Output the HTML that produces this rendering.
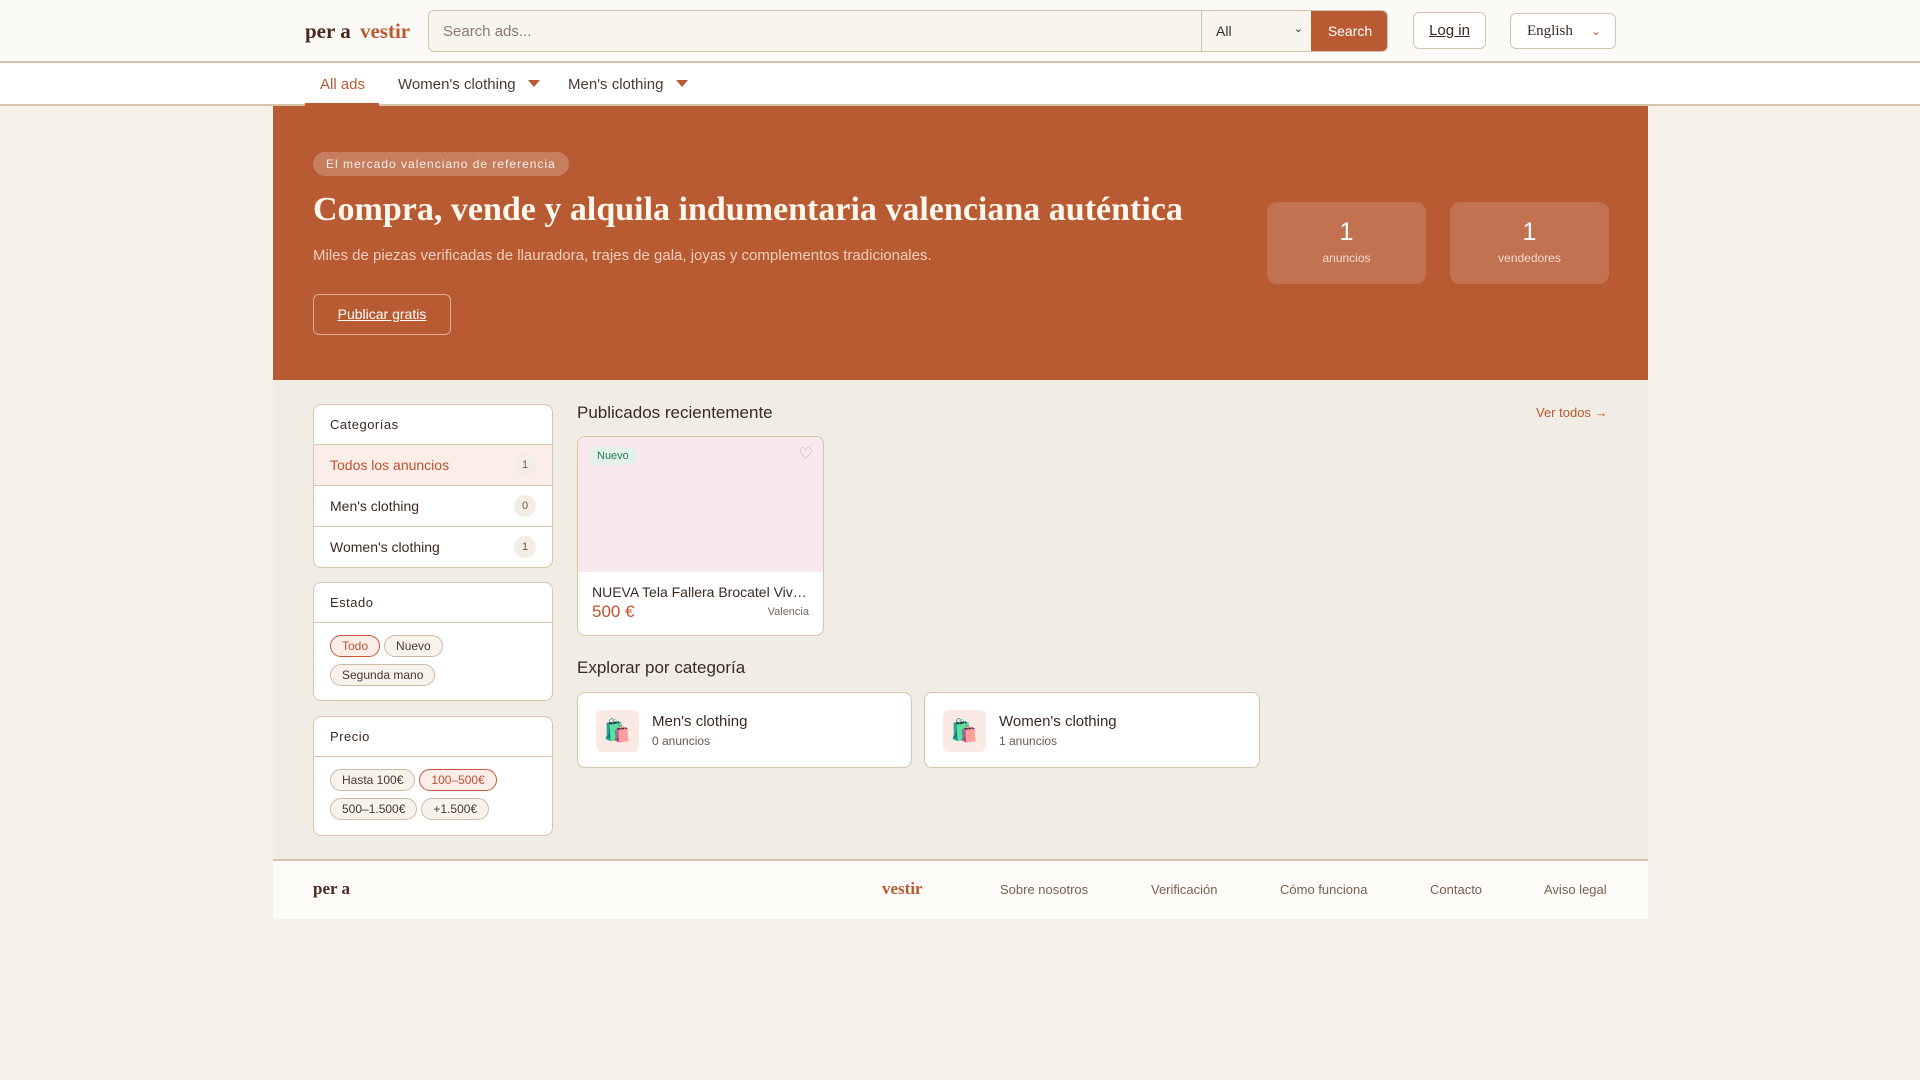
<!DOCTYPE html>
<html><head><meta charset="utf-8"><style>
*{box-sizing:border-box;margin:0;padding:0}
body{width:1920px;height:1080px;background:#f6f2eb;font-family:"Liberation Sans",sans-serif;position:relative;overflow:hidden;color:#3a2a22}
.a{position:absolute}
.serif{font-family:"Liberation Serif",serif}
#hdr{left:0;top:0;width:1920px;height:63px;background:#fcfaf7;border-bottom:2px solid #d6c3ab}
#nav{left:0;top:63px;width:1920px;height:43px;background:#fff;border-bottom:2px solid #d6c3ab}
.pill{border-radius:12px;border:1px solid #cdbba5;background:#f7f2ea;font-size:12px;color:#4a3a30;padding:3px 11px;display:inline-block;margin:0 4px 7px 0}
.pill.on{border-color:#c9553a;color:#c0502f;background:#fbeee9}
.card{background:#fff;border:1px solid #d6c4ad;border-radius:8px}
.ch{height:40px;border-bottom:1px solid #d6c4ad;padding:0 16px;line-height:40px;font-size:13px;letter-spacing:.5px}
.row{height:41px;border-bottom:1px solid #d6c4ad;padding:0 16px;line-height:41px;font-size:14px;position:relative}
.cnt{position:absolute;right:16px;top:9px;width:22px;height:22px;border-radius:11px;background:#f4ede4;font-size:11px;text-align:center;line-height:22px;color:#6b5a4e}
</style></head><body>
<div class="a" id="hdr"></div>
<div class="a serif" style="left:305px;top:19px;font-size:21px;color:#4a2a1e;font-weight:bold">per a <span style="color:#b85a32;margin-left:4px">vestir</span></div>
<div class="a" style="left:428px;top:10px;width:960px;height:42px;border:1px solid #d6c3ab;border-radius:6px;background:#f8f4ee;overflow:hidden">
<div class="a" style="left:14px;top:12px;font-size:15px;color:#8a7a70">Search ads...</div>
<div class="a" style="left:772px;top:0;width:110px;height:40px;border-left:1px solid #d6c3ab;font-size:14px;padding:12px 0 0 14px">All<span style="position:absolute;right:8px;top:11px;font-size:11px">&#x2304;</span></div>
<div class="a" style="left:882px;top:0;width:78px;height:40px;background:#b85a32;color:#fff;font-size:14px;text-align:center;line-height:40px">Search</div></div>
<div class="a" style="left:1413px;top:12px;width:73px;height:37px;border:1px solid #d6c3ab;border-radius:6px;background:#fff;text-align:center;line-height:35px;font-size:15px;text-decoration:underline">Log in</div>
<div class="a serif" style="left:1510px;top:13px;width:106px;height:36px;border:1px solid #d6c3ab;border-radius:6px;background:#fff;line-height:34px;font-size:15px;padding-left:16px">English<span style="position:absolute;right:14px;color:#b85a32;font-size:12px">&#x2304;</span></div>
<div class="a" id="nav"></div>
<div class="a" style="left:320px;top:76px;font-size:15px;color:#b85a32">All ads</div>
<div class="a" style="left:305px;top:103px;width:74px;height:3px;background:#b85a32"></div>
<div class="a" style="left:398px;top:76px;font-size:15px;color:#4a3a30">Women's clothing</div>
<div class="a" style="left:528px;top:80px;border:6px solid transparent;border-top:7px solid #b85a32"></div>
<div class="a" style="left:568px;top:76px;font-size:15px;color:#4a3a30">Men's clothing</div>
<div class="a" style="left:676px;top:80px;border:6px solid transparent;border-top:7px solid #b85a32"></div>
<div class="a" style="left:273px;top:106px;width:1375px;height:754px;background:#f1ece4"></div>
<div class="a" style="left:273px;top:106px;width:1375px;height:274px;background:#b85a32"></div>
<div class="a" style="left:313px;top:152px;height:24px;padding:0 13px;border-radius:12px;background:rgba(255,255,255,.22);color:#fbeee6;font-size:12px;letter-spacing:1px;line-height:24px">El mercado valenciano de referencia</div>
<div class="a serif" style="left:313px;top:191px;font-size:34px;font-weight:bold;color:#fff6ee">Compra, vende y alquila indumentaria valenciana auténtica</div>
<div class="a" style="left:313px;top:247px;font-size:15px;color:#f1cfbf">Miles de piezas verificadas de llauradora, trajes de gala, joyas y complementos tradicionales.</div>
<div class="a" style="left:313px;top:294px;width:138px;height:41px;border:1px solid rgba(255,255,255,.5);border-radius:6px;color:#fff;font-size:14px;text-decoration:underline;text-align:center;line-height:39px">Publicar gratis</div>
<div class="a" style="left:1267px;top:202px;width:159px;height:82px;border-radius:10px;background:rgba(255,255,255,.15);color:#fff;text-align:center"><div style="font-size:25px;margin-top:16px">1</div><div style="font-size:12px;color:#f5d9cb;margin-top:4px">anuncios</div></div>
<div class="a" style="left:1450px;top:202px;width:159px;height:82px;border-radius:10px;background:rgba(255,255,255,.15);color:#fff;text-align:center"><div style="font-size:25px;margin-top:16px">1</div><div style="font-size:12px;color:#f5d9cb;margin-top:4px">vendedores</div></div>
<div class="a card" style="left:313px;top:404px;width:240px;height:164px;overflow:hidden">
<div class="ch">Categorías</div>
<div class="row" style="background:#fbeee9;color:#c0502f">Todos los anuncios<span class="cnt">1</span></div>
<div class="row">Men's clothing<span class="cnt">0</span></div>
<div class="row" style="border:0">Women's clothing<span class="cnt">1</span></div></div>
<div class="a card" style="left:313px;top:582px;width:240px;height:119px">
<div class="ch">Estado</div><div style="padding:12px 16px 0">
<span class="pill on">Todo</span><span class="pill">Nuevo</span><span class="pill">Segunda mano</span></div></div>
<div class="a card" style="left:313px;top:716px;width:240px;height:120px">
<div class="ch">Precio</div><div style="padding:12px 16px 0">
<span class="pill">Hasta 100€</span><span class="pill on">100–500€</span><span class="pill">500–1.500€</span><span class="pill">+1.500€</span></div></div>
<div class="a" style="left:577px;top:403px;font-size:17px">Publicados recientemente</div>
<div class="a" style="left:1536px;top:405px;font-size:13px;color:#b85a32">Ver todos →</div>
<div class="a card" style="left:577px;top:436px;width:247px;height:200px;overflow:hidden">
<div style="height:135px;background:#f9e8ee;position:relative"><span style="position:absolute;left:11px;top:10px;background:#e2f2ea;color:#2e7a55;font-size:11px;padding:3px 8px;border-radius:10px">Nuevo</span><span style="position:absolute;right:10px;top:7px;color:#c9a0a8;font-size:16px">♡</span></div>
<div style="padding:12px 16px 0 14px;font-size:14px;white-space:nowrap;overflow:hidden;text-overflow:ellipsis">NUEVA Tela Fallera Brocatel Vivaldi</div>
<div style="padding:2px 14px 0;position:relative"><span style="color:#c0502f;font-size:17px">500 €</span><span style="position:absolute;right:14px;top:6px;font-size:11px;color:#7a6a60">Valencia</span></div></div>
<div class="a" style="left:577px;top:658px;font-size:17px">Explorar por categoría</div>
<div class="a card" style="left:577px;top:692px;width:335px;height:76px"><div class="a" style="left:18px;top:17px;width:43px;height:42px;border-radius:6px;background:#fbeae4;text-align:center;line-height:42px;font-size:22px">🛍️</div><div class="a" style="left:74px;top:20px;font-size:15px">Men's clothing</div><div class="a" style="left:74px;top:41px;font-size:12px;color:#6b5a4e">0 anuncios</div></div>
<div class="a card" style="left:924px;top:692px;width:336px;height:76px"><div class="a" style="left:18px;top:17px;width:43px;height:42px;border-radius:6px;background:#fbeae4;text-align:center;line-height:42px;font-size:22px">🛍️</div><div class="a" style="left:74px;top:20px;font-size:15px">Women's clothing</div><div class="a" style="left:74px;top:41px;font-size:12px;color:#6b5a4e">1 anuncios</div></div>
<div class="a" style="left:273px;top:859px;width:1375px;height:60px;background:#fdfbf8;border-top:2px solid #d6c3ab"></div>
<div class="a serif" style="left:313px;top:879px;font-size:17px;color:#4a2a1e;font-weight:bold">per a</div>
<div class="a serif" style="left:882px;top:879px;font-size:17px;color:#b85a32;font-weight:bold">vestir</div>
<div class="a" style="left:1000px;top:882px;font-size:13px;color:#7a6050">Sobre nosotros</div>
<div class="a" style="left:1151px;top:882px;font-size:13px;color:#7a6050">Verificación</div>
<div class="a" style="left:1280px;top:882px;font-size:13px;color:#7a6050">Cómo funciona</div>
<div class="a" style="left:1430px;top:882px;font-size:13px;color:#7a6050">Contacto</div>
<div class="a" style="left:1544px;top:882px;font-size:13px;color:#7a6050">Aviso legal</div>
</body></html>
